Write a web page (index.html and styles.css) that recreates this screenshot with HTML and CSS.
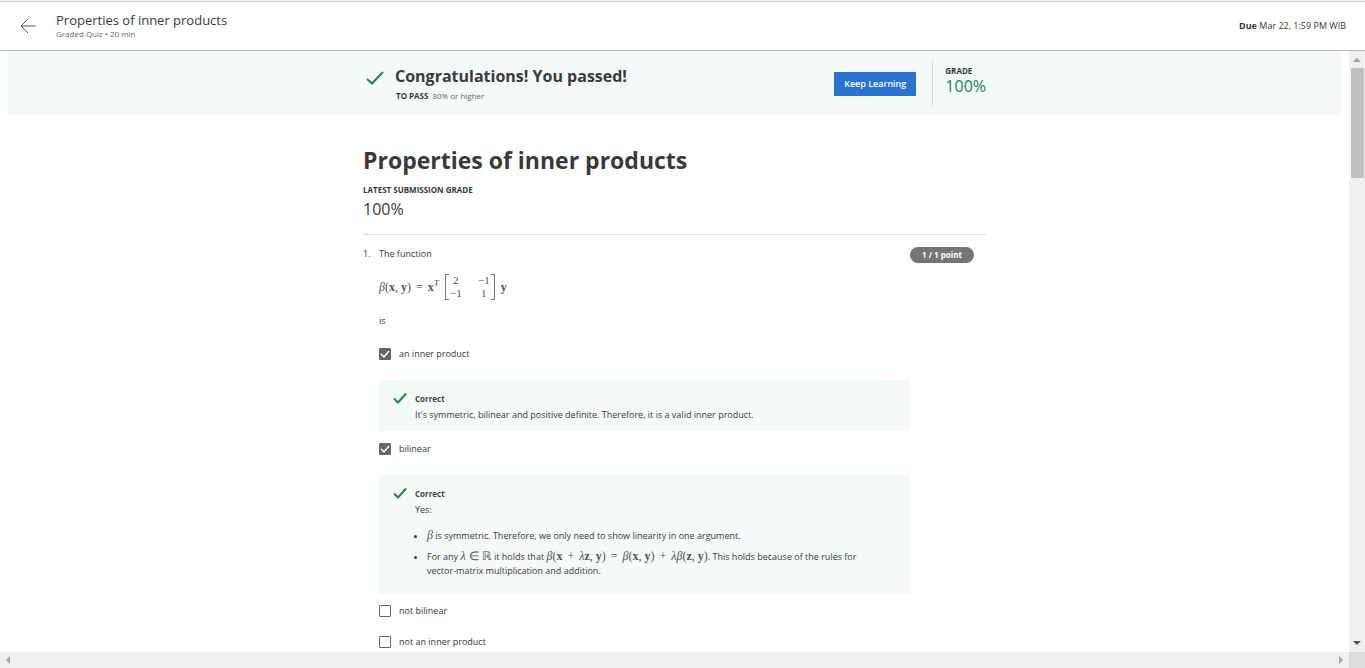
FILE: index.html
```html
<!DOCTYPE html>
<html lang="en">
<head>
<meta charset="utf-8">
<title>Properties of inner products</title>
<link rel="stylesheet" href="styles.css">
</head>
<body>
<div class="app">
  <header class="topbar">
    <a class="back" href="#" aria-label="Back">
      <svg width="16" height="16" viewBox="0 0 16 16"><path d="M1 8H15.500M8 1L1 8l7 7"/></svg>
    </a>
    <div class="topbar-title">
      <div class="item-name">Properties of inner products</div>
      <div class="item-meta">Graded Quiz • 20 min</div>
    </div>
    <div class="due"><b>Due</b> Mar 22, 1:59 PM WIB</div>
  </header>
  <div class="viewport">
    <main class="page">
      <section class="banner">
        <div class="column banner-row">
          <svg class="tick tick-large" viewBox="0 0 18 14"><path d="M1 8l5 4.500L17 1"/></svg>
          <div class="result">
            <h2>Congratulations! You passed!</h2>
            <p class="pass-line"><b>TO PASS</b><span>80% or higher</span></p>
          </div>
          <button class="keep" type="button">Keep Learning</button>
          <div class="grade">
            <div class="caption">GRADE</div>
            <div class="score score-pass">100%</div>
          </div>
        </div>
      </section>
      <div class="column">
        <div class="intro">
          <h1>Properties of inner products</h1>
          <div class="caption">LATEST SUBMISSION GRADE</div>
          <div class="score">100%</div>
        </div>
        <section class="question">
          <div class="number">1.</div>
          <div class="question-body">
            <p class="prompt">The function</p>
            <div class="math formula">
              <span><i>β</i>(<b>x</b>, <b>y</b>)<span class="op">=</span><b>x</b><sup>T</sup></span>
              <span class="matrix"><span>2</span><span>−1</span><span>−1</span><span>1</span></span>
              <b>y</b>
            </div>
            <p class="prompt">is</p>
            <label class="option"><input type="checkbox" checked><span>an inner product</span></label>
            <div class="feedback">
              <svg class="tick" viewBox="0 0 14 12"><path d="M1 6.500l4 4L13 1.500"/></svg>
              <div class="feedback-text">
                <b class="verdict">Correct</b>
                <p>It's symmetric, bilinear and positive definite. Therefore, it is a valid inner product.</p>
              </div>
            </div>
            <label class="option option-after"><input type="checkbox" checked><span>bilinear</span></label>
            <div class="feedback">
              <svg class="tick" viewBox="0 0 14 12"><path d="M1 6.500l4 4L13 1.500"/></svg>
              <div class="feedback-text">
                <b class="verdict">Correct</b>
                <p>Yes:</p>
                <ul>
                  <li><span class="math"><i>β</i></span> is symmetric. Therefore, we only need to show linearity in one argument.</li>
                  <li>For any <span class="math"><i>λ</i> ∈ ℝ</span> it holds that <span class="math"><i>β</i>(<b>x</b><span class="op">+</span><i>λ</i><b>z</b>, <b>y</b>)<span class="op">=</span><i>β</i>(<b>x</b>, <b>y</b>)<span class="op">+</span><i>λβ</i>(<b>z</b>, <b>y</b>)</span>. This holds because of the rules for <span class="nowrap">vector-matrix</span> multiplication and addition.</li>
                </ul>
              </div>
            </div>
            <label class="option option-tight"><input type="checkbox"><span>not bilinear</span></label>
            <label class="option option-tight"><input type="checkbox"><span>not an inner product</span></label>
          </div>
          <div class="points">1 / 1 point</div>
        </section>
      </div>
    </main>
    <div class="bar bar-vertical">
      <svg width="8" height="16" viewBox="0 0 8 16"><path class="dim" d="M0 11h8L4 7z"/></svg>
      <div class="thumb"></div>
      <svg class="last" width="8" height="16" viewBox="0 0 8 16"><path class="dark" d="M0 5h8L4 9z"/></svg>
    </div>
    <div class="bar bar-horizontal">
      <svg width="16" height="8" viewBox="0 0 16 8"><path class="dim" d="M10 0v8L6 4z"/></svg>
      <svg width="16" height="8" viewBox="0 0 16 8"><path class="dim" d="M6 0v8l4-4z"/></svg>
    </div>
    <div class="corner"></div>
  </div>
</div>
</body>
</html>
```

FILE: styles.css
```css
* { box-sizing: border-box; }
body {
  margin: 0;
  background: #fff;
  color: #373a3c;
  font: 9px/14px "Open Sans", "Liberation Sans", sans-serif;
}
h1, h2, p, ul { margin: 0; }
svg { flex: none; fill: none; }
.app {
  display: flex;
  flex-direction: column;
  height: 100vh;
  border-top: 1px solid #f5f5f5;
}
.topbar {
  display: flex;
  align-items: center;
  height: 50px;
  flex: none;
  padding: 0 19px 0 20px;
  border-top: 1px solid #ccc;
  border-bottom: 1px solid #bababa;
}
.back { display: flex; margin-right: 20px; stroke: #555; }
.topbar-title { flex: 1; }
.item-name { font-size: 13px; line-height: 16px; }
.item-meta { font-size: 8px; line-height: 12px; color: #666; }
.viewport {
  flex: 1;
  min-height: 0;
  display: grid;
  grid-template: minmax(0, 1fr) 16px / minmax(0, 1fr) 16px;
}
.page { overflow: hidden; padding: 0 8px; }
.column { max-width: 623px; margin: 0 auto; }
.banner { background: #f4faf8; }
.banner-row { display: flex; align-items: center; height: 64px; }
.tick { width: 14px; height: 12px; stroke: #1f8354; stroke-width: 2; }
.tick-large { width: 18px; height: 14px; margin: 0 11px 10px 3px; }
.result { flex: 1; padding-top: 2px; }
.result h2 { font-size: 16px; font-weight: 700; line-height: 24px; }
.pass-line { font-size: 8px; line-height: 16px; display: flex; gap: 4px; padding-left: 1px; }
.pass-line span { color: #666; }
.keep {
  height: 24px;
  padding: 0 10px;
  margin: 2px 16px 0 0;
  border: 0;
  border-radius: 1px;
  background: #2a73cc;
  color: #fff;
  font: 600 9px/14px "Open Sans", sans-serif;
}
.grade { height: 46px; padding: 4px 0 0 12px; border-left: 1px solid #d9dfdd; }
.caption { font-size: 8px; font-weight: 700; line-height: 14px; }
.score { font-size: 16px; line-height: 16px; }
.score-pass { color: #1f8354; }
.intro { padding: 29px 0 16px; border-bottom: 1px solid #ddd; }
.intro h1 { font-size: 23px; font-weight: 700; line-height: 32px; }
.intro .caption { margin: 7px 0 4px; }
.intro .score { line-height: 17px; }
.question { display: flex; align-items: flex-start; padding-top: 12px; }
.number { width: 16px; }
.question-body { flex: 1; max-width: 531px; }
.points {
  padding: 0 12px;
  line-height: 16px;
  font-size: 8px;
  font-weight: 700;
  color: #fff;
  background: #757575;
  border-radius: 8px;
}
.math { font-family: "Liberation Serif", serif; font-size: 12px; line-height: 14px; color: #505355; }
.math sup { font-size: 9px; font-style: italic; line-height: 0; }
.op { padding: 0 5px; }
.nowrap { white-space: nowrap; }
.formula { display: flex; align-items: center; gap: 6px; height: 28px; margin: 12px 0 13px; }
.matrix {
  display: grid;
  grid-template-columns: 16px 16px;
  gap: 0 12px;
  justify-items: center;
  padding: 0 2px;
  font-size: 11px;
  line-height: 13px;
  background:
    linear-gradient(#777, #777) 0 0 / 3px 1px,
    linear-gradient(#777, #777) 0 100% / 3px 1px,
    linear-gradient(#777, #777) 100% 0 / 3px 1px,
    linear-gradient(#777, #777) 100% 100% / 3px 1px;
  background-repeat: no-repeat;
  border: solid #777;
  border-width: 0 1px;
}
.option { display: flex; align-items: center; gap: 8px; padding: 19px 0; line-height: 14px; }
.option-after { padding-top: 11px; }
.option input {
  appearance: none;
  width: 12px;
  height: 12px;
  margin: 0;
  border: 1px solid #666;
  border-radius: 1px;
}
.option input:checked {
  background: #666 url("data:image/svg+xml,%3Csvg xmlns='http://www.w3.org/2000/svg' viewBox='0 0 10 10'%3E%3Cpath d='M1 5l3 3 5-6' fill='none' stroke='white' stroke-width='1.500'/%3E%3C/svg%3E") center / 10px;
}
.feedback { display: flex; gap: 8px; padding: 10px 14px 8px; background: #f4faf8; }
.feedback .tick { margin-top: 2px; }
.feedback-text { flex: 1; }
.feedback p { line-height: 16px; }
.verdict { display: block; font-size: 8px; line-height: 17px; color: #444; }
.feedback ul { padding: 10px 0 2px 12px; }
.feedback li { margin-bottom: 6px; }
.option-tight { padding: 10px 0 7px; }
.bar { display: flex; align-items: center; background: #f0f0f0; }
.bar-vertical { flex-direction: column; }
.bar-horizontal { justify-content: space-between; }
.thumb { width: 13px; height: 110px; margin-top: 1px; background: #c1c1c1; }
.last { margin-top: auto; }
.dim { fill: #a3a3a3; }
.dark { fill: #505050; }
.corner { background: #dcdcdc; }
```
